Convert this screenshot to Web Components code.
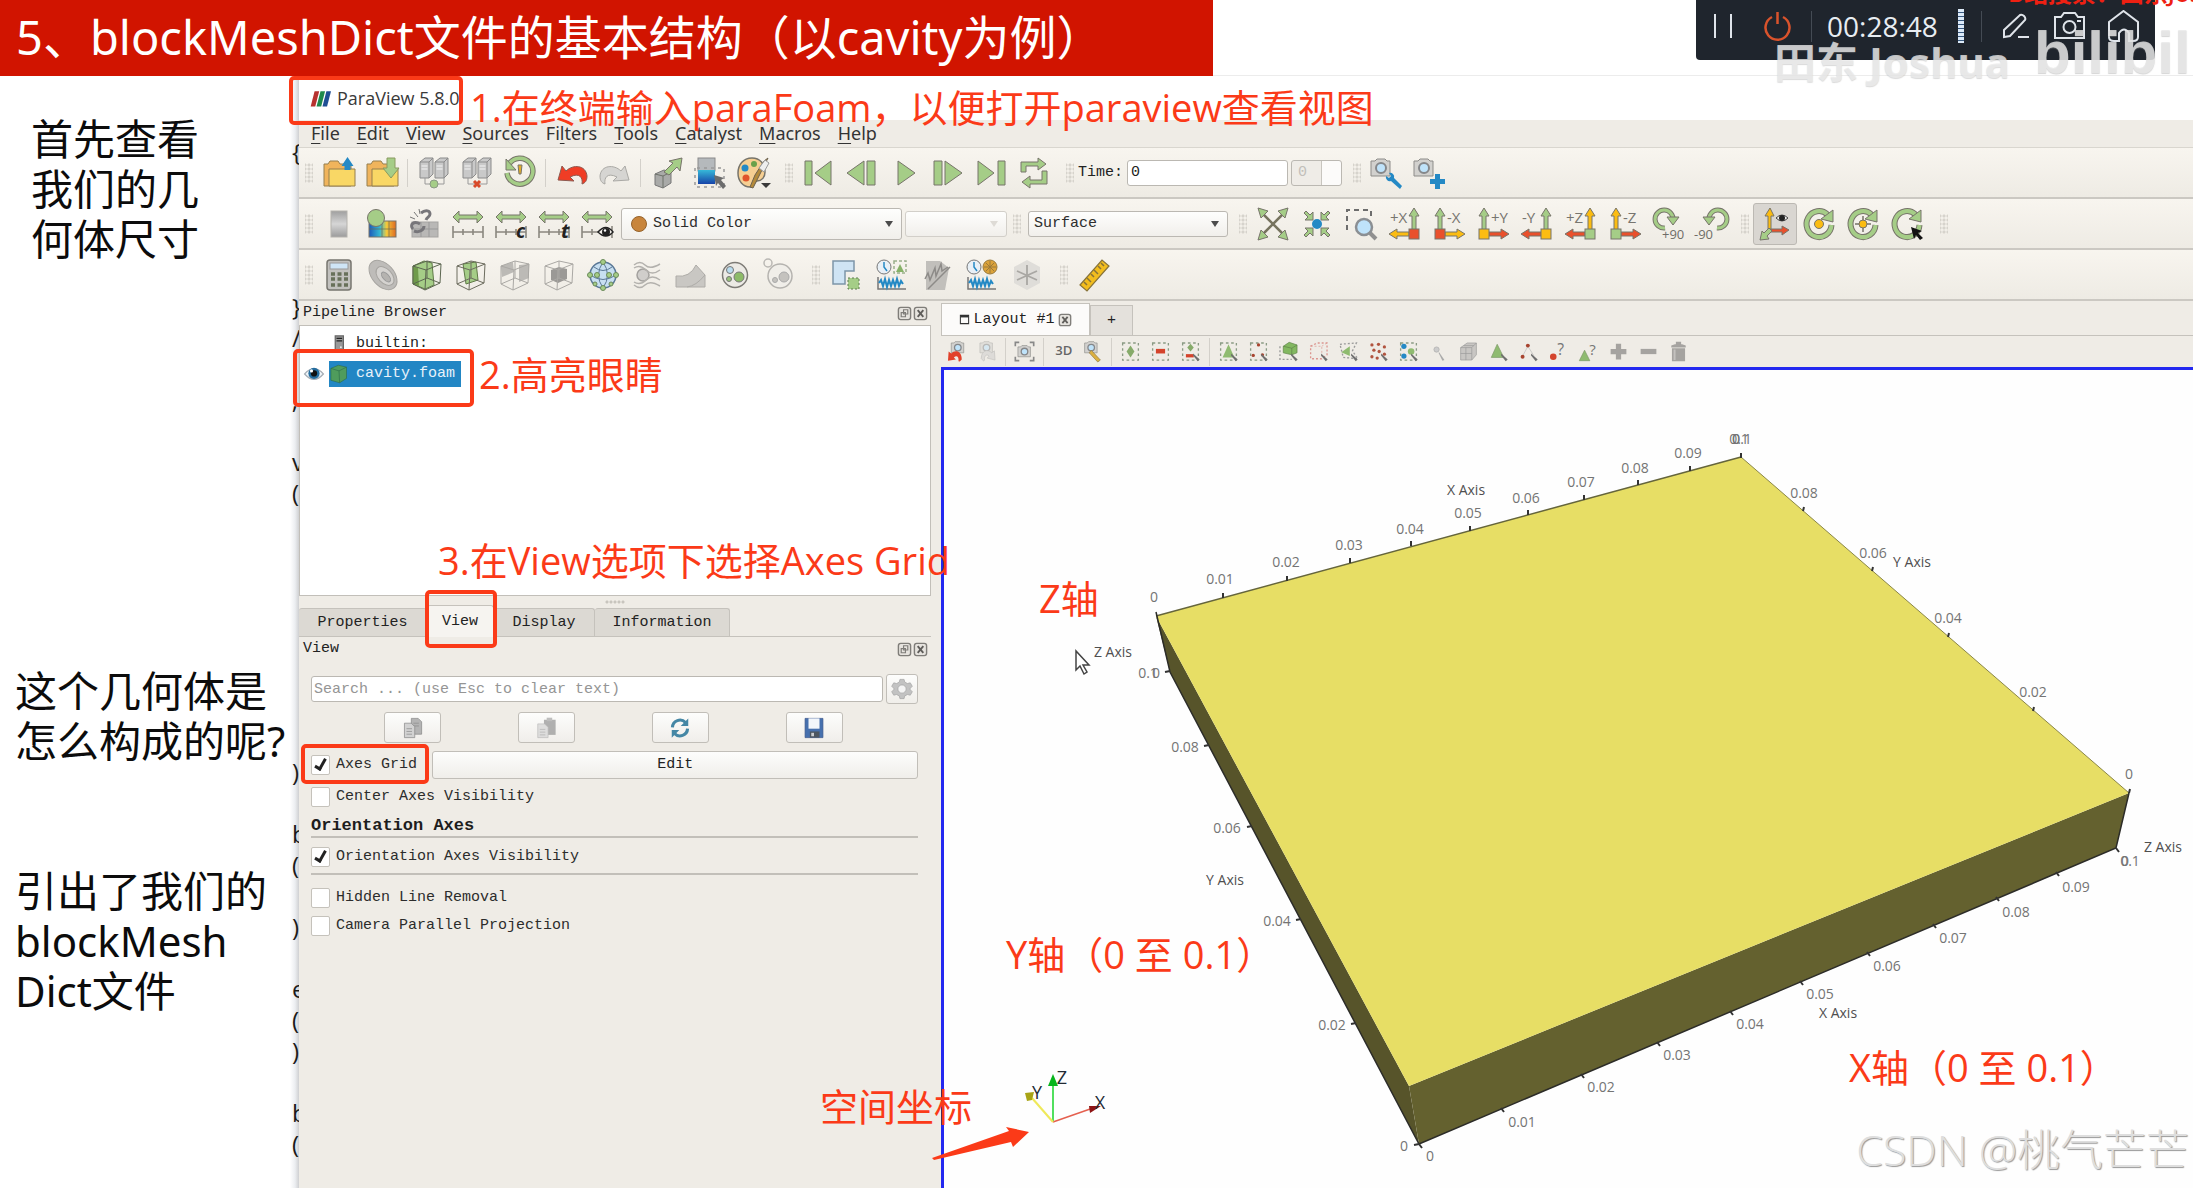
<!DOCTYPE html>
<html lang="zh-CN">
<head>
<meta charset="utf-8">
<title>blockMeshDict文件的基本结构</title>
<style>
html,body{margin:0;height:100%;overflow:hidden;background:#fff}
</style>
</head>
<body>
<slide-page></slide-page>
<script>
const UI = '"Open Sans","Noto Sans CJK SC",sans-serif';
const WIDE = '"Noto Sans","Noto Sans CJK SC",sans-serif';
const MONO = '"Liberation Mono","Noto Sans CJK SC",monospace';
const G = '#a5cd87', K = '#77746a', Y = '#fbbc12', R = '#e9502c', B = '#2489c5';

/* ---------- icon drawings, all on a 32 x 32 grid ---------- */
const server = (x, f) => `<path d="M${x} 5l5-4h8v16l-4 4h-9z" fill="${f}" stroke="#8b8b8b"/><path d="M${x} 5h9l4-4M${x+9} 5v16" fill="none" stroke="#8b8b8b"/><path d="M${x+1.5} 9h6M${x+1.5} 12h6" stroke="#f4f4f4"/>`;
const range = `<path d="M1 9l6-6v4h18V3l6 6-6 6v-4H7v4z" fill="${G}" stroke="${K}"/><path d="M1 18v12M31 18v12M11 21v6M21 21v6M1 24h30" stroke="#8a877f" stroke-width="1.6" fill="none"/>`;
const cam = (x, y) => `<path d="M${x} ${y+3}h4l2-2h8l2 2h3v15h-19z" fill="#d2d1ce" stroke="#8d8c89"/><circle cx="${x+10}" cy="${y+10}" r="5" fill="#bfe3fa" stroke="#85878a" stroke-width="2"/>`;
const cubeLines = c => `<path d="M2 7l14-5 14 3-1 19-15 7L2 25zM2 7l13 4 15-6M15 11l-1 20M2 25l14-6 13 5M16 2v17" fill="none" stroke="${c}"/>`;
const up = (x, f) => `<path d="M${x} 0l5 8h-3v16h-4V8h-3z" fill="${f}" stroke="${K}"/>`;
const side = (l, f) => l ? `<path d="M0 26l8-5v3h12v4H8v3z" fill="${f}" stroke="${K}"/>` : `<path d="M32 26l-8-5v3H12v4h12v3z" fill="${f}" stroke="${K}"/>`;
const axis = (t, l, cu, cs, cb) => l
  ? up(25, cu) + side(1, cs) + `<rect x="20" y="21" width="10" height="10" fill="${cb}" stroke="${K}"/><text x="1" y="15" font-size="15" fill="#77756f">${t}</text>`
  : up(7, cu) + side(0, cs) + `<rect x="2" y="21" width="10" height="10" fill="${cb}" stroke="${K}"/><text x="14" y="15" font-size="15" fill="#77756f">${t}</text>`;
const sel = (s) => `<rect x="4" y="3" width="24" height="26" fill="none" stroke="#8a9a84" stroke-width="2" stroke-dasharray="4 4"/>${s}`;
const hand = `<path d="M20 19l10 9-3 3-7-9z" fill="#6f6f6f"/>`;
const ring = `<path d="M24.500 6.500A12.500 13 0 1 0 28.500 17" fill="none" stroke="${K}" stroke-width="6"/><path d="M24.500 6.500A12.500 13 0 1 0 28.500 17" fill="none" stroke="${G}" stroke-width="4"/><path d="M30 2v12l-12-3z" fill="${G}" stroke="${K}"/>`;
const plot = `<path d="M2 18v12h28" stroke="#777" stroke-width="1.500" fill="none"/><path d="M3 24l2-3 2 6 2-7 2 8 2-7 2 6 2-6 2 6 2-7 2 7 2-5 2 3" stroke="${B}" stroke-width="2" fill="none"/>`;
const clock = `<circle cx="8" cy="8" r="7" fill="#e8f0f6" stroke="#777"/><path d="M8 3v5l3 4" stroke="${B}" stroke-width="1.500" fill="none"/>`;

const ICONS = {
  open: `<path d="M1 29V7h4l2-3h8l2 3h11v22z" fill="#f0b45c" stroke="#957e4e"/><path d="M6 12h26v17H6z" fill="#f9d765" stroke="#957e4e"/><path d="M24.500 0l6 9h-3v4h-6V9h-3z" fill="${B}"/>`,
  save: `<path d="M1 29V7h4l2-3h8l2 3h11v22z" fill="#f0b45c" stroke="#957e4e"/><path d="M6 12h26v17H6z" fill="#f9d765" stroke="#957e4e"/><path d="M21 1h8v10h4l-8 10-8-10h4z" fill="${G}" stroke="#8a9a60"/>`,
  connect: server(2, '#c9c9c9') + server(17, '#c9c9c9') + `<path d="M7 21v6h19v-6" fill="none" stroke="#999"/><circle cx="16" cy="27" r="4" fill="${G}" stroke="#8a9a84"/>`,
  disconnect: server(2, '#c9c9c9') + server(17, '#c9c9c9') + `<path d="M7 21v6h19v-6" fill="none" stroke="#999"/><path d="M13 24l6 6M19 24l-6 6" stroke="#d84a2a" stroke-width="3"/>`,
  reload: `<path d="M5 7A13 13 0 1 1 3 16" fill="none" stroke="${K}" stroke-width="5.500"/><path d="M5 7A13 13 0 1 1 3 16" fill="none" stroke="${G}" stroke-width="3.500"/><path d="M2 2v11h10z" fill="${G}" stroke="${K}"/><path d="M14 8h4l-1 9h-2z" fill="#e2ae2c" stroke="${K}"/>`,
  undo: `<path d="M2 23l4-14 4 5c7-7 20-6 21 5 0 5-2 7-5 8 1-6-2-12-12-7l4 4z" fill="#f03d25" stroke="#8d5a50"/>`,
  redo: `<path d="M30 23L26 9l-4 5C15 7 2 8 1 19c0 5 2 7 5 8-1-6 2-12 12-7l-4 4z" fill="#d6d5d2" stroke="#aaa9a5"/>`,
  extract: `<path d="M4 17l9-4 7 2v11l-8 5-8-3z" fill="#a9aaa8" stroke="#777"/><path d="M4 17l8 2 8-4M12 19v12" stroke="#6d7169" fill="none"/><path d="M13 15l9-9-4-2 13-3-2 13-3-4-8 8z" fill="${G}" stroke="${K}"/>`,
  colormap: `<defs><linearGradient id="g" x2="0" y2="1"><stop offset="0" stop-color="#36b8d8"/><stop offset="1" stop-color="#1643a8"/></linearGradient></defs><rect x="4" y="1" width="17" height="13" fill="#b5b9bc" stroke="#8a8a8a"/><rect x="4" y="13" width="17" height="14" fill="url(#g)"/><path d="M1 11v19h29V11z" fill="none" stroke="#999" stroke-width="1.500" stroke-dasharray="3 4"/><path d="M20 18l10 3-3 2 5 6-3 3-5-6-2 3z" fill="#6c6c6c"/>`,
  palette: `<path d="M15 1C6 1 1 8 1 16s5 14 12 14c5 0 3-5 7-6 5 0 8-4 8-9 0-8-5-14-13-14z" fill="#f6cf92" stroke="${K}" stroke-width="1.500"/><circle cx="8" cy="11" r="3.500" fill="${B}"/><circle cx="17" cy="7" r="3" fill="#6aa14a"/><circle cx="9" cy="21" r="3.500" fill="#e0532a"/><path d="M27 4l4-3-9 18-6 12-3-1 5-12z" fill="#b48a3a" stroke="#6c6250"/><path d="M22 11l6-8 4 3-5 9z" fill="#eee" stroke="#999"/><path d="M24 26h10l-5 5z" fill="#3a3a3a"/>`,
  first: `<path d="M2 4h7v24H2zM28 4v24L12 16z" fill="${G}" stroke="${K}"/>`,
  prev: `<path d="M21 4h8v24h-8zM18 4v24L1 16z" fill="${G}" stroke="${K}"/>`,
  play: `<path d="M9 4v24l17-12z" fill="${G}" stroke="${K}"/>`,
  next: `<path d="M2 4h8v24H2zM13 4v24l17-12z" fill="${G}" stroke="${K}"/>`,
  last: `<path d="M23 4h7v24h-7zM3 4v24l16-12z" fill="${G}" stroke="${K}"/>`,
  loop: `<path d="M3 15V5h17V1l8 6-8 6V9H8v6zM29 14v13H12v4l-8-6 8-6v4h12v-9z" fill="${G}" stroke="${K}"/>`,
  camtool: cam(0, 1) + `<path d="M18 16a4 4 0 0 1 5 5l8 8-2 3-9-8a4 4 0 0 1-5-5l3 2 2-2z" fill="${B}"/>`,
  camadd: cam(0, 1) + `<path d="M21 17h5v5h5v5h-5v5h-5v-5h-5v-5h5z" fill="${B}"/>`,
  legend: `<defs><linearGradient id="g" x2="0" y2="1"><stop offset="0" stop-color="#9f9f9f"/><stop offset=".5" stop-color="#d6d6d6"/><stop offset="1" stop-color="#9b9b9b"/></linearGradient></defs><rect x="8" y="3" width="16" height="26" fill="url(#g)" stroke="#b5b3ae"/>`,
  editmap: `<defs><linearGradient id="g"><stop offset="0" stop-color="#1c59ba"/><stop offset=".4" stop-color="#35b8d2"/><stop offset=".65" stop-color="#f3c93a"/><stop offset="1" stop-color="#df6b22"/></linearGradient></defs><rect x="3" y="13" width="27" height="16" fill="url(#g)" stroke="${K}"/><path d="M3 21h27M16 13v16M23 13v16" stroke="#6b6b50" stroke-width=".7"/><circle cx="10" cy="10" r="8.500" fill="${G}" stroke="${K}"/>`,
  unlink: `<rect x="3" y="14" width="26" height="15" fill="#b9b8b6" stroke="#a5a4a1"/><path d="M3 21h26M12 14v15M20 14v15" stroke="#999"/><path d="M12 5c5-4 9-2 9 1s-3 3-4 6M4 21c-4-4 1-9 7-5M15 18c0 4-5 7-10 5" fill="none" stroke="#77767a" stroke-width="3"/><path d="M5 4l4 5M1 9l5 2M10 1l1 5" stroke="#777"/>`,
  range,
  rangec: range + `<text x="21" y="30" font-size="19" font-weight="700" font-style="italic" fill="#222">c</text>`,
  ranget: range + `<text x="23" y="30" font-size="20" font-weight="700" font-style="italic" fill="#222">t</text>`,
  rangeeye: range + `<path d="M17 24q8-9 15 0-7 8-15 0z" fill="#f3f0ea" stroke="#222" stroke-width="1.500"/><circle cx="25" cy="24" r="4" fill="#222"/><circle cx="24" cy="22.500" r="1.200" fill="#fff"/>`,
  expand: `<path d="M5 5l22 22M27 5L5 27" stroke="#76735e" stroke-width="2.500"/><path d="M1 0l10 3-7 7zM31 0l-3 10-7-7zM1 32l3-10 7 7zM31 32l-10-3 7-7z" fill="${G}" stroke="${K}"/>`,
  center: `<circle cx="16" cy="16" r="5" fill="${B}"/><path id="q" d="M12 12H4l3-3-4-4 2-2 4 4 3-3z" fill="${G}" stroke="${K}"/><path d="M20 12h8l-3-3 4-4-2-2-4 4-3-3zM12 20H4l3 3-4 4 2 2 4-4 3 3zM20 20h8l-3 3 4 4-2 2-4-4-3 3z" fill="${G}" stroke="${K}"/>`,
  zoom: `<path d="M2 22V2h24v6" fill="none" stroke="#6d6d6d" stroke-width="2" stroke-dasharray="5 4"/><path d="M24 24l7 7" stroke="#909090" stroke-width="4"/><circle cx="19" cy="19" r="8" fill="#bfe3fa" stroke="#8b8f93" stroke-width="2.500"/>`,
  px: axis('+X', 1, G, Y, R), mx: axis('-X', 0, G, Y, R), py: axis('+Y', 0, G, R, Y),
  my: axis('-Y', 1, G, R, Y), pz: axis('+Z', 1, Y, R, G), mz: axis('-Z', 0, Y, R, G),
  rotp: `<path d="M12 20A9 9 0 1 1 20 12" fill="none" stroke="${K}" stroke-width="5"/><path d="M12 20A9 9 0 1 1 20 12" fill="none" stroke="${G}" stroke-width="3"/><path d="M14 9h12l-6 8z" fill="${G}" stroke="${K}"/><text x="9" y="31" font-size="13" fill="#6f6d68">+90</text>`,
  rotm: `<path d="M20 20A9 9 0 1 0 12 12" fill="none" stroke="${K}" stroke-width="5"/><path d="M20 20A9 9 0 1 0 12 12" fill="none" stroke="${G}" stroke-width="3"/><path d="M6 9h12l-6 8z" fill="${G}" stroke="${K}"/><text x="-3" y="31" font-size="13" fill="#6f6d68">-90</text>`,
  showaxes: `<path d="M11 0l4 8h-3v13h-3V8H6z" fill="${Y}" stroke="${K}"/><path d="M30 22l-7-4v3H12v3h11v3z" fill="${R}" stroke="${K}"/><path d="M1 32l2-9 2 2 5-5 3 3-5 5 2 3z" fill="${G}" stroke="${K}"/><path d="M17 10q6-6 12 0-6 6-12 0z" fill="#eee" stroke="#444"/><circle cx="23" cy="10" r="3" fill="#222"/>`,
  ring1: ring + `<circle cx="16" cy="16" r="4.500" fill="${Y}" stroke="${K}"/>`,
  ring2: ring + `<path d="M16 8v16M8 16h16" stroke="${K}" stroke-width="1.500"/><circle cx="16" cy="16" r="4" fill="${Y}" stroke="${K}"/>`,
  ring3: ring + `<path d="M20 19l11 4-4 2 5 5-3 2-4-5-2 4z" fill="#111"/>`,
  calc: `<rect x="4" y="1" width="24" height="30" rx="3" fill="#c2c1be" stroke="#77756f" stroke-width="1.500"/><rect x="7" y="4" width="18" height="6" fill="#cfe5f6" stroke="#999"/><path d="M8 15h17M8 20h17M8 26h17" stroke="#68705a" stroke-width="3.500" stroke-dasharray="4 2.500"/>`,
  contour: `<ellipse cx="16" cy="16" rx="11" ry="17" transform="rotate(-42 16 16)" fill="#bebcb9" stroke="#a6a4a0"/><ellipse cx="18" cy="17" rx="7" ry="11" transform="rotate(-42 18 17)" fill="#d5d3d0" stroke="#a6a4a0"/><ellipse cx="19" cy="18" rx="3" ry="6" transform="rotate(-42 19 18)" fill="#b5b3b0" stroke="#999"/>`,
  clip: `<path d="M2 7l11-5 8 2 2 22-9 4-12-5z" fill="${G}" stroke="#5f7a46"/><path d="M2 7l5 2 1 18-6-2z" fill="#6f9b4b"/>` + cubeLines('#5c6650'),
  slice: `<path d="M8 5l13-2 2 18-12 4z" fill="${G}" stroke="#5f7a46"/>` + cubeLines('#6c6c5e'),
  threshold: `<path d="M2 7l12-4 1 10-12 5zM20 6l10-1v14l-10 4z" fill="#bcbab6"/>` + cubeLines('#aaa8a4'),
  subset: `<path d="M8 11l8-3 8 2v10l-9 4-7-3z" fill="#9b9996"/>` + cubeLines('#aaa8a4'),
  glyph: `<circle cx="16" cy="16" r="13" fill="#c7dff1" stroke="#5a7896" stroke-width="1.500"/><path d="M3 16q13 9 26 0M16 3q-9 13 0 26M16 3q9 13 0 26M7 8q9 7 18 0" fill="none" stroke="#5a7896"/><g fill="${G}" stroke="#6a8a5a"><circle cx="16" cy="3" r="2.500"/><circle cx="3" cy="16" r="2.500"/><circle cx="29" cy="16" r="2.500"/><circle cx="16" cy="29" r="2.500"/><circle cx="10" cy="16" r="2.500"/><circle cx="22" cy="16" r="2.500"/><circle cx="8" cy="25" r="2"/><circle cx="24" cy="25" r="2"/></g>`,
  stream: `<circle cx="12" cy="16" r="6" fill="#d0cecb" stroke="#a3a19e" stroke-width="1.500"/><path d="M3 6q6-5 11 0t15-1M3 9q6-4 12 2t14 0M3 26q6 5 11 0t15 1M3 23q6 4 12-2t14 0" fill="none" stroke="#b3b1ad" stroke-width="1.500"/>`,
  warp: `<path d="M1 17q14 2 20-11l9 10v12H1z" fill="#c9c7c3" stroke="#aeaca8"/><path d="M30 16q-9 11-18 12" fill="none" stroke="#aeaca8"/>`,
  group: `<circle cx="16" cy="16" r="12.500" fill="#eceae5" stroke="#7d7b76" stroke-width="1.500"/><circle cx="11" cy="11" r="3.500" fill="#b9dcee" stroke="#777"/><circle cx="20" cy="18" r="5" fill="#8dbb68" stroke="#777"/><circle cx="10" cy="20" r="2.500" fill="#9ac37a" stroke="#777"/>`,
  level: `<circle cx="5" cy="4" r="4" fill="none" stroke="#bab8b4" stroke-width="1.500"/><circle cx="17" cy="17" r="12" fill="#f0eee9" stroke="#b5b3af" stroke-width="1.500"/><circle cx="21" cy="18" r="5" fill="#c4c2be" stroke="#aaa"/><circle cx="12" cy="21" r="2.500" fill="#c4c2be" stroke="#aaa"/>`,
  extractsel: `<path d="M2 2h21v10H14v13H2z" fill="#cfe4f4" stroke="#7d95a8" stroke-width="1.500"/><rect x="17" y="19" width="11" height="11" fill="${G}" stroke="#5e7a50" stroke-dasharray="2 2"/>`,
  plotsel: clock + `<rect x="18" y="2" width="12" height="12" fill="none" stroke="#9ab08c" stroke-width="1.500" stroke-dasharray="3 2"/><path d="M24 5l4 8h-8z" fill="#86b268"/>` + plot,
  plotline: `<path d="M5 2h14l9 7-4 22H5z" fill="#c1bfbb"/><path d="M4 20l3-6 2 7 5-12 1 8 5-12 1 7 6-4M7 30L29 8" stroke="#8d8b88" stroke-width="1.500" fill="none"/>`,
  plotglobal: clock + `<circle cx="24" cy="8" r="7" fill="#dba23a" stroke="#9a7a3a"/><path d="M18 8h12M24 2v12M20 4l8 8M28 4l-8 8" stroke="#9a7a3a"/>` + plot,
  probe: `<path d="M3 8l13-7 13 7v16l-13 7-13-7z" fill="#dfddd9"/><path d="M16 6v20M6 12l20 9M26 12L6 21" stroke="#a9a7a3" stroke-width="1.800"/>`,
  ruler: `<path d="M2 26L24 1l7 6L9 32z" fill="#f2bd1e" stroke="#87733a" stroke-width="1.200"/><path d="M6 23l3 3M9 19l4 4M13 15l3 3M16 11l4 4M20 7l3 3M23 4l3 3" stroke="#87733a" stroke-width="1.500"/>`,
  vundo: cam(8, 0) + `<path d="M3 30l1-14 4 3c6-6 16-4 16 9-4 4-4 4-5 2 1-6-3-9-7-5l3 3z" fill="#e1402a"/>`,
  vredo: `<g opacity=".5">${cam(6, 0)}<path d="M29 29l-1-14-4 3C18 12 8 14 8 27c4 4 4 4 5 2-1-6 3-10 7-6l-3 3z" fill="#ccc" stroke="#999"/></g>`,
  snap: cam(6, 6) + `<path d="M2 8V2h6M24 2h6v6M30 24v6h-6M8 30H2v-6" fill="none" stroke="#888" stroke-width="2.500"/>`,
  three: `<text x="5" y="22" font-size="20" font-weight="600" fill="#666">3D</text>`,
  vzoom: cam(4, 0) + `<path d="M14 14l14 15-4 3-13-14z" fill="#dcb040" stroke="#8d7743"/>`,
  sadd: sel(`<path d="M16 7l6 9-6 9-6-9z" fill="#86ab6a"/>`), sminus: sel(`<path d="M9 12h14v7H9z" fill="#d4442c"/>`),
  stoggle: sel(`<path d="M16 4l5 6-5 6-5-6z" fill="#86ab6a"/><path d="M9 20h12v5H9z" fill="#d4442c"/>` + hand),
  scell: sel(`<path d="M16 5l9 20H7z" fill="#8fbb70"/>` + hand), spoint: sel(`<g fill="#a8442f"><circle cx="16" cy="6" r="2.500"/><circle cx="8" cy="22" r="2.500"/><circle cx="22" cy="21" r="2.500"/></g>` + hand),
  sfrust: `<path d="M8 8l9-6 12 4v12l-8 3-13-3z" fill="#83b861" stroke="#5c8147"/><path d="M8 8l13 3 8-5M21 11v10" fill="none" stroke="#5c8147"/><path d="M3 8v20h18" fill="none" stroke="#999" stroke-dasharray="3 3" stroke-width="2"/>` + hand,
  sfrustp: `<path d="M4 8l10-5h15v18l-8 6H4z" fill="none" stroke="#dc9690" stroke-width="2" stroke-dasharray="3 3"/><path d="M4 8h17v17M21 8l8-5" stroke="#dc9690" fill="none" stroke-dasharray="3 3"/>` + hand,
  spoly: `<path d="M5 17l13-9v15z" fill="#8fbb70"/><path d="M3 5l25-2-6 12 8 12-22-2z" fill="none" stroke="#999" stroke-dasharray="3 3" stroke-width="2"/>` + hand,
  spolyp: `<g fill="#b1543f"><circle cx="6" cy="6" r="2.500"/><circle cx="16" cy="5" r="2.500"/><circle cx="25" cy="9" r="2.500"/><circle cx="9" cy="14" r="2.500"/><circle cx="17" cy="16" r="2.500"/><circle cx="6" cy="24" r="2.500"/><circle cx="14" cy="26" r="2.500"/><circle cx="25" cy="20" r="2.500"/></g>` + hand,
  sblock: sel(`<g fill="${B}"><circle cx="9" cy="8" r="4"/><circle cx="9" cy="23" r="4"/></g><circle cx="20" cy="16" r="5" fill="#8fbb70"/>` + hand),
  ipoint: `<circle cx="13" cy="13" r="4" fill="#ccc" stroke="#aaa"/><path d="M17 17l8 12-3 1-6-12z" fill="#aaa"/>`,
  icell: `<path d="M4 10l10-7h14v18l-7 8H4z" fill="#c8c6c3" stroke="#999"/><path d="M4 10h17v19M21 10l7-7M4 19h17M12 10v19M9 7h15" fill="none" stroke="#999"/>`,
  hcell: `<path d="M14 5l10 20H5z" fill="#8fbb70" stroke="#7a9565"/>` + hand, hpoint: `<path d="M15 8L7 23M15 8l9 14" stroke="#bbb"/><g fill="#a8442f"><circle cx="15" cy="7" r="3"/><circle cx="7" cy="24" r="3"/></g>` + hand,
  qpoint: `<circle cx="8" cy="24" r="5" fill="#d4442c"/><text x="14" y="22" font-size="24" fill="#777">?</text>`,
  qcell: `<path d="M10 14l8 16H2z" fill="#8fbb70" stroke="#7a9565"/><text x="17" y="21" font-size="23" fill="#777">?</text>`,
  plus: `<path d="M12 4h8v8h8v8h-8v8h-8v-8H4v-8h8z" fill="#a5a3a0"/>`, minus: `<path d="M4 12h24v8H4z" fill="#a5a3a0"/>`,
  trash: `<path d="M5 7q11-6 22 0v3H5zM6 11h20v20H6zM12 1h8v4h-8z" fill="#a5a3a0"/><path d="M10 13v16" stroke="#c3c1be" stroke-width="3"/>`,
  copy: `<path d="M15 2h10l5 5v18H15z" fill="#b4b4b4" stroke="#858585"/><path d="M18 9h8M18 13h8" stroke="#888"/><path d="M5 9h10l5 5v16H5z" fill="#d2d2d2" stroke="#858585"/><path d="M8 17h8M8 21h8M8 25h8" stroke="#888"/>`,
  paste: `<g opacity=".75"><path d="M13 4h17v22H13z" fill="#999"/><path d="M17 1h8v5h-8z" fill="#aaa"/><path d="M4 10h10l5 5v15H4z" fill="#d6d6d6" stroke="#aaa"/><path d="M7 18h8M7 22h8M7 26h8" stroke="#999"/></g>`,
  refresh: `<path d="M5 15A11 11 0 0 1 24 8M27 17A11 11 0 0 1 8 24" fill="none" stroke="#4587a5" stroke-width="4.500"/><path d="M28 2v11H17zM4 30V19h11z" fill="#4587a5"/>`,
  disk: `<path d="M3 2h26v28H3z" fill="#4670ae" stroke="#3c568a"/><path d="M8 2h16v15H8z" fill="#f2f6fb"/><path d="M10 21h14v9H10z" fill="#4d5660"/><path d="M12 23h4v5h-4z" fill="#c9ccd0"/>`,
  gear: `<path d="M13 2h6l1 4 4 2 4-1 3 5-3 3v2l3 3-3 5-4-1-4 2-1 4h-6l-1-4-4-2-4 1-3-5 3-3v-2l-3-3 3-5 4 1 4-2z" fill="#c2c2c2" stroke="#a2a2a2"/><circle cx="16" cy="16" r="6" fill="#f4f4f4" stroke="#a2a2a2"/>`,
  float: `<rect x="3" y="3" width="26" height="26" rx="5" fill="#e6e3de" stroke="#7f7d79" stroke-width="3"/><path d="M14 8h9v9h-9zM9 14h9v9H9z" fill="none" stroke="#7f7d79" stroke-width="2.500"/>`,
  close: `<rect x="3" y="3" width="26" height="26" rx="5" fill="#e6e3de" stroke="#7f7d79" stroke-width="3"/><path d="M10 9l12 14M22 9L10 23" stroke="#5f5d5a" stroke-width="4"/>`,
  host: `<path d="M10 3h13v26H10z" fill="#999" stroke="#666" stroke-width="2"/><path d="M12 7h9M12 11h9" stroke="#222" stroke-width="2"/><circle cx="19" cy="21" r="1.500" fill="#eee"/>`,
  block: `<path d="M3 7l12-5 13 3v18l-11 7-14-4z" fill="#4f9c5c" stroke="#2b6b49"/><path d="M3 7l13 4 12-6M16 11l1 19" stroke="#2b6b49" fill="none"/>`,
  eye: `<path d="M1 16Q16-1 31 16 16 33 1 16z" fill="#f1f6fa" stroke="#a5adb5" stroke-width="2"/><circle cx="16" cy="15" r="9" fill="#236c9e"/><circle cx="16" cy="15" r="5" fill="#111"/><circle cx="12" cy="11" r="2.500" fill="#fff"/>`,
  frame: `<path d="M4 4h24v24H4z" fill="none" stroke="#333" stroke-width="3"/><path d="M4 7h24" stroke="#333" stroke-width="6"/>`,
  logo: `<path d="M7 5h7L8 28H1z" fill="#b7322f"/><path d="M16 5h7l-6 23h-7z" fill="#1f8a4c"/><path d="M25 5h7l-6 23h-7z" fill="#1f4f94"/>`
};

const define = (name, css, html, init) => customElements.define(name, class extends HTMLElement {
  constructor() { super(); this.attachShadow({ mode: 'open' }); }
  connectedCallback() {
    if (this.shadowRoot.childNodes.length) return;
    this.shadowRoot.innerHTML = `<style>*{box-sizing:border-box}${css}</style>${typeof html === 'function' ? html(this) : html}`;
    if (init) init(this);
  }
});

/* ---------- small parts ---------- */
define('pv-icon', `:host{display:block;flex:none;width:var(--icon,32px);height:var(--icon,32px)}svg{display:block;width:100%;height:100%;overflow:visible;font-family:${UI}}`,
  el => `<svg viewBox="0 0 32 32" aria-hidden="true">${ICONS[el.getAttribute('name')]}</svg>`);

define('tool-button', `:host{display:block;flex:none;width:var(--cell,43px)}button{width:100%;height:var(--tall,42px);padding:0;border:1px solid transparent;border-radius:3px;background:none;display:flex;align-items:center;justify-content:center}:host([pressed]) button{background:#d9d6d1;border-color:#bcb9b3}`,
  el => `<button type="button" aria-label="${el.getAttribute('icon')}"><pv-icon name="${el.getAttribute('icon')}"></pv-icon></button>`);

define('tool-sep', `:host{display:block;flex:none;width:var(--sep,9px);height:28px;background:linear-gradient(#d3d0ca,#d3d0ca) center/1px 100% no-repeat}`, '');
define('tool-handle', `:host{display:block;flex:none;width:8px;height:20px;margin:0 4px 0 6px;background:radial-gradient(circle,#d6d3cc 1px,transparent 2px) center/4px 4px}`, '');
define('tool-group', `:host{display:flex;align-items:center;margin-right:5px}:host([tight]){margin-right:0}`, '<slot></slot>');
define('tool-bar', `:host{display:flex;align-items:center;height:51px;background:linear-gradient(#f8f5ef,#eeebe4);border-bottom:2px solid #cbc8c2}:host([slim]){height:31px;border:0;background:#efece6}`, '<slot></slot>');

define('combo-box', `:host{display:block;flex:none;height:26px;margin-left:3px}
div{height:100%;display:flex;align-items:center;border:1px solid #bbb8b2;border-radius:3px;background:linear-gradient(#fefefd,#f1efeb);padding:0 8px 0 5px}
select{appearance:none;flex:1;min-width:0;border:0;background:none;font:15px/20px ${MONO};color:#2e2e2e;padding:0;opacity:1}
svg{flex:none}.dot{margin:0 6px 0 4px}:host([off]) div{border-color:#d2cfc9}`,
  el => `<div>${el.hasAttribute('dot') ? '<svg class="dot" width="16" height="16"><circle cx="8" cy="8" r="7.500" fill="#c8853c" stroke="#96632c"/></svg>' : ''}<select aria-label="${el.getAttribute('label')}" ${el.hasAttribute('off') ? 'disabled' : ''}><option>${el.getAttribute('value') || ''}</option></select><svg width="8" height="6"><path d="M0 0h8L4 6z" fill="${el.hasAttribute('off') ? '#dedbd6' : '#4c4c4c'}"/></svg></div>`);

define('check-row', `:host{display:block;flex:none}label{display:flex;align-items:center;gap:6px;height:22px;font:15px/22px ${MONO};color:#2c2c2c;white-space:pre}
input{appearance:none;display:flex;align-items:flex-start;justify-content:center;width:19px;height:20px;margin:0;padding-top:1px;border:1px solid #c5c2bb;border-radius:2px;background:#fff}
input:checked::after{content:"";width:7px;height:13px;box-sizing:border-box;border:solid #222;border-width:0 3px 3px 0;transform:rotate(30deg)}`,
  el => `<label><input type="checkbox" ${el.hasAttribute('checked') ? 'checked' : ''}><slot></slot></label>`);

define('dock-title', `:host{display:flex;align-items:center;flex:none;height:24px;padding:0 2px 0 4px;font:15px/20px ${MONO};color:#222}span{flex:1}button{border:0;background:none;padding:0;width:16px;height:16px;--icon:15px}`,
  `<span><slot></slot></span><button type="button" aria-label="float"><pv-icon name="float"></pv-icon></button><button type="button" aria-label="close"><pv-icon name="close"></pv-icon></button>`);

/* ---------- application parts ---------- */
define('menu-bar', `:host{display:block;background:#efece6;height:28px;border-bottom:1px solid #d9d6cf;box-sizing:border-box}nav{display:flex;gap:17px;padding:0 12px;font:18px/27px ${WIDE};color:#333}a{color:inherit;text-decoration:none}u{text-underline-offset:3px;text-decoration-thickness:1px}`,
  `<nav><a href="#"><u>F</u>ile</a><a href="#"><u>E</u>dit</a><a href="#"><u>V</u>iew</a><a href="#"><u>S</u>ources</a><a href="#">Fi<u>l</u>ters</a><a href="#"><u>T</u>ools</a><a href="#"><u>C</u>atalyst</a><a href="#"><u>M</u>acros</a><a href="#"><u>H</u>elp</a></nav>`);

define('title-bar', `:host{display:flex;align-items:center;gap:6px;height:44px;padding-left:11px;background:#fff;font:18px/24px ${UI};color:#3a3a3a;--icon:21px}`, `<pv-icon name="logo"></pv-icon><span>ParaView 5.8.0</span>`);

const tb = s => s.split(' ').map(n => n === '|' ? '<tool-sep></tool-sep>' : `<tool-button icon="${n.replace('!', '')}"${n.endsWith('!') ? ' pressed' : ''}></tool-button>`).join('');

define('main-tools', `:host{display:block}.time{display:flex;align-items:center;gap:3px;font:15px/20px ${MONO};color:#222}.time label{width:46px}
input{height:26px;border:1px solid #bbb8b2;border-radius:3px;background:#fff;font:15px/20px ${MONO};color:#222;padding:0 3px;margin:0}
.t{width:161px}.s{width:51px;color:#c2bfba;background:linear-gradient(90deg,#efece7 29px,#c8c5bf 29px,#c8c5bf 30px,#fcfbfa 30px);padding-left:6px}
.c1{width:281px;height:32px}.c2{width:102px}.c3{width:200px}.w44{--cell:44px}.w45{--cell:45px}`,
`<tool-bar><tool-handle></tool-handle><tool-group>${tb('open save | connect disconnect reload | undo redo | extract colormap palette')}</tool-group>
<tool-handle></tool-handle><tool-group>${tb('first prev play next last loop')}</tool-group>
<tool-handle></tool-handle><tool-group><div class="time"><label for="t">Time:</label><input id="t" class="t" value="0"><input class="s" aria-label="time index" value="0" disabled></div></tool-group>
<tool-handle></tool-handle><tool-group>${tb('camtool camadd')}</tool-group></tool-bar>
<tool-bar><tool-handle></tool-handle><tool-group tight>${tb('legend editmap unlink range rangec ranget rangeeye')}<combo-box class="c1" dot label="Coloring" value="Solid Color"></combo-box><combo-box class="c2" off label="Component"></combo-box></tool-group>
<tool-handle></tool-handle><tool-group><combo-box class="c3" label="Representation" value="Surface"></combo-box></tool-group>
<tool-handle></tool-handle><tool-group tight class="w44">${tb('expand center zoom px mx py my pz mz rotp rotm')}</tool-group>
<tool-handle></tool-handle><tool-group class="w44">${tb('showaxes! ring1 ring2 ring3')}</tool-group><tool-handle></tool-handle></tool-bar>
<tool-bar><tool-handle></tool-handle><tool-group class="w44">${tb('calc contour clip slice threshold subset glyph stream warp group level')}</tool-group>
<tool-handle></tool-handle><tool-group class="w45">${tb('extractsel plotsel plotline plotglobal probe')}</tool-group>
<tool-handle></tool-handle><tool-group>${tb('ruler')}</tool-group></tool-bar>`);

define('pipeline-tree', `:host{display:block;flex:none;box-sizing:border-box;height:271px;border:1px solid #c2bfb9;background:#fff}ul{list-style:none;margin:0;padding:3px 0 0 4px}li{display:flex;align-items:center;height:30px;font:15px/26px ${MONO};color:#222;--icon:20px}
.eye{width:25px;flex:none}.n{display:flex;align-items:center;height:26px;padding:0 6px 0 0;gap:7px}.on{background:#2286c4;color:#e8f2fa}`,
`<ul><li><span class="eye"></span><span class="n"><pv-icon name="host"></pv-icon>builtin:</span></li><li><span class="eye"><pv-icon name="eye"></pv-icon></span><span class="n on"><pv-icon name="block"></pv-icon>cavity.foam</span></li></ul>`);

define('view-panel', `:host{display:flex;flex-direction:column;flex:1;min-height:0}
.grip{height:4px;width:20px;margin:4px auto 3px;background:radial-gradient(circle,#c8c5be 1px,transparent 2px) center/4px 4px;flex:none}
.tabs{display:flex;align-items:flex-end;height:30px;border-bottom:1px solid #c5c2bc;flex:none}
.tabs button{height:28px;border:1px solid #c5c2bc;border-bottom:0;border-left-width:0;background:#dcd9d3;font:15px/20px ${MONO};color:#222;padding:0;border-radius:3px 3px 0 0}
.tabs .v{height:32px;background:#f6f4f0;margin-bottom:-1px}
.body{padding:13px 13px 0 12px;display:flex;flex-direction:column}
.search{display:flex;align-items:center;gap:3px;height:30px}
.search input{flex:1;min-width:0;height:26px;border:1px solid #bbb8b2;border-radius:3px;font:15px/20px ${MONO};padding:0 2px;background:#fff}input::placeholder{color:#959595;opacity:1}
.b{border:1px solid #c1beb8;border-radius:3px;background:linear-gradient(#fdfdfc,#f0eeea);padding:0;display:flex;align-items:center;justify-content:center;font:15px/20px ${MONO};color:#222;--icon:22px}
.gear{width:32px;height:30px}.acts{display:flex;justify-content:center;gap:77px;margin:8px 0;padding-right:3px}.acts .b{width:57px;height:31px}
.grid{display:flex;align-items:center;justify-content:space-between;height:28px}.grid .b{flex:0 0 80%;height:28px}
h3{margin:8px 0 0;font:bold 17px/20px ${MONO};color:#1d1d1d;border-bottom:2px solid #c2bfb9}
.rule{border-bottom:2px solid #c2bfb9;padding:8px 0 5px}.hid{margin-top:12px}.cen{margin-top:7px}.camr{margin-top:6px}`,
`<div class="grip"></div><div class="tabs"><button type="button" style="width:128px">Properties</button><button type="button" class="v" style="width:67px">View</button><button type="button" style="width:101px">Display</button><button type="button" style="width:135px">Information</button></div>
<dock-title>View</dock-title>
<div class="body"><div class="search"><input aria-label="Search" placeholder="Search ... (use Esc to clear text)"><button type="button" class="b gear" aria-label="advanced"><pv-icon name="gear"></pv-icon></button></div>
<div class="acts">${['copy','paste','refresh','disk'].map(n => `<button type="button" class="b" aria-label="${n}"><pv-icon name="${n}"></pv-icon></button>`).join('')}</div>
<div class="grid"><check-row checked>Axes Grid</check-row><button type="button" class="b">Edit</button></div>
<check-row class="cen">Center Axes Visibility</check-row><h3>Orientation Axes</h3>
<div class="rule"><check-row checked>Orientation Axes Visibility</check-row></div>
<check-row class="hid">Hidden Line Removal</check-row><check-row class="camr">Camera Parallel Projection</check-row></div>`);

/* ---------- render view ---------- */
const L = (t, x, y) => `<text x="${x}" y="${y + 5}">${t}</text>`;
const run = (pts) => pts.map(p => L(...p)).join('');
const ticks = (pts, dx, dy) => `<path d="${pts.map(p => `M${p[0]} ${p[1]}l${dx} ${dy}`).join('')}" stroke="#333" stroke-width="2"/>`;
define('render-view', `:host{display:block;flex:1;min-height:0;border:solid #2328f0;border-width:3px 0 0 3px;background:#fefefe}svg{display:block;width:100%;height:100%;font:14px ${UI};fill:#747474;text-anchor:middle}.a{fill:#4f4f4f}.t{font-size:18px;fill:#222a33}`,
`<svg viewBox="944 370 1249 818" role="img" aria-label="cavity">
<path d="M1156 616L1409 1086 1419 1144 1170 672z" fill="#57542a"/><path d="M1409 1086L2129 793 2116 848 1419 1144z" fill="#64612f"/>
<path d="M1156 616L1741 457 2129 793 1409 1086z" fill="#e7de65"/>
<path d="M1156 616L1741 457" fill="none" stroke="#65653c" stroke-width="1.500"/><path d="M1741 457L2129 793" fill="none" stroke="#8a8648"/><path d="M2129 793L2116 848 1419 1144 1170 672 1156 612" fill="none" stroke="#2c2c28" stroke-width="1.500"/>
${ticks([[1223,598],[1287,581],[1350,563],[1411,546],[1470,531],[1528,515],[1584,500],[1638,485],[1690,471],[1741,458]], 0, -5)}
${ticks([[1803,511],[1872,571],[1948,637],[2033,711],[2129,793]], 1, -4)}
${ticks([[1170,671],[1209,745],[1252,826],[1301,919],[1356,1023],[1419,1144]], -5, 1)}
${ticks([[1419,1144],[1501,1108],[1581,1074],[1657,1042],[1730,1011],[1800,981],[1867,952],[1933,924],[1996,897],[2056,872],[2116,848]], 3, 4)}
${run([['0',1154,597],['0.01',1220,579],['0.02',1286,562],['0.03',1349,545],['0.04',1410,529],['0.05',1468,513],['0.06',1526,498],['0.07',1581,482],['0.08',1635,468],['0.09',1688,453],['0.1',1739,439],['0.1',1742,439],['0',1736,439],
['0.08',1804,493],['0.06',1873,553],['0.04',1948,618],['0.02',2033,692],['0',2129,774],['0.1',2130,861],['0',2125,861],
['0.1',1148,673],['0',1156,673],['0.08',1185,747],['0.06',1227,828],['0.04',1277,921],['0.02',1332,1025],['0',1404,1146],
['0',1430,1156],['0.01',1522,1122],['0.02',1601,1087],['0.03',1677,1055],['0.04',1750,1024],['0.05',1820,994],['0.06',1887,966],['0.07',1953,938],['0.08',2016,912],['0.09',2076,887]])}
<g class="a">${run([['X Axis',1466,490],['Y Axis',1912,562],['Z Axis',2163,847],['Z Axis',1113,652],['Y Axis',1225,880],['X Axis',1838,1013]])}</g>
<path d="M1053 1122V1086" stroke="#51df5e" stroke-width="2"/><path d="M1053 1122L1093 1108" stroke="#e5604f" stroke-width="1.500"/><path d="M1053 1122L1032 1098" stroke="#efe95a" stroke-width="2"/>
<path d="M1053 1074l5 12h-10z" fill="#08b51c"/><path d="M1101 1106l-11 7-1-7z" fill="#8e1414"/><path d="M1025 1093l9-1-2 8-5 1z" fill="#a8a416"/>
<g class="t"><text x="1062" y="1084">Z</text><text x="1037" y="1099">Y</text><text x="1100" y="1109">X</text></g>
<path d="M1076 651v19l4-4 4 8 3-2-4-7h6z" fill="#fff" stroke="#444" stroke-width="1.500"/>
</svg>`);

define('layout-area', `:host{display:flex;flex-direction:column;flex:1;min-width:0}
.tabs{display:flex;align-items:flex-end;height:35px;border-bottom:1px solid #c5c2bc;flex:none}.tabs button{border:1px solid #c5c2bc;border-bottom:0;padding:0;font:15px/20px ${MONO};color:#222;height:30px;width:43px;background:#e4e1dc}
.tabs .on{display:flex;align-items:center;justify-content:center;gap:3px;width:149px;height:32px;background:#fcfbfa;--icon:14px}
tool-bar{--cell:30px;--icon:21px;--sep:8px;--tall:26px}`,
`<div class="tabs"><button type="button" class="on"><pv-icon name="frame" style="--icon:11px"></pv-icon>Layout #1<pv-icon name="close"></pv-icon></button><button type="button">+</button></div>
<tool-bar slim>${tb('vundo vredo | snap | three vzoom | sadd sminus stoggle | scell spoint sfrust sfrustp spoly spolyp sblock ipoint icell hcell hpoint qpoint qcell plus minus trash')}</tool-bar>
<render-view></render-view>`);

define('paraview-window', `:host{display:flex;flex-direction:column;flex:1;min-width:0;background:#efece6}.work{flex:1;min-height:0;display:flex;gap:10px}.dock{flex:none;width:632px;display:flex;flex-direction:column}`,
`<title-bar></title-bar><menu-bar></menu-bar><main-tools></main-tools><div class="work"><div class="dock"><dock-title>Pipeline Browser</dock-title><pipeline-tree></pipeline-tree><view-panel></view-panel></div><layout-area></layout-area></div>`);

/* ---------- slide parts ---------- */
define('code-gutter', `:host{display:block;flex:none;box-sizing:border-box;width:9px;padding:60px 0 0 2px;overflow:hidden;background:linear-gradient(90deg,#fff,#eceef1 5px,#cfd0d2);font:24px/31px ${UI};color:#1a1a1a}div{height:31px}`,
() => { const m = {0:'{',5:'}',6:'/',8:';',10:'v',11:'(',20:')',22:'b',23:'(',25:')',27:'e',28:'(',29:')',31:'b',32:'('}; return Array.from({length:33}, (_, i) => `<div>${m[i] || ''}</div>`).join(''); });

define('slide-notes', `:host{display:block;flex:none;box-sizing:border-box;width:290px;padding:38px 0 0 15px;font:42px/50px ${WIDE};color:#0c0c0c;white-space:nowrap}p{margin:0 0 100px}.first{padding-left:16px;margin-bottom:402px}`,
`<p class="first">首先查看<br>我们的几<br>何体尺寸</p><p>这个几何体是<br>怎么构成的呢?</p><p>引出了我们的<br>blockMesh<br>Dict文件</p>`);

define('slide-heading', `:host{display:block;flex:none;height:76px;background:linear-gradient(#ececec,#ececec) bottom/100% 1px no-repeat #fff}h1{margin:0;width:1213px;max-width:100%;height:76px;background:#d11400;color:#fff;font:400 47px/74px ${WIDE};padding-left:16px;white-space:nowrap}`, `<h1><slot></slot></h1>`);

define('note-mark', `:host{position:absolute;font:38px/50px ${UI};color:#fb3a18;white-space:nowrap}`, '<slot></slot>', el => { const [x, y] = el.getAttribute('at').split(' '); el.style.left = x + 'px'; el.style.top = (y - 27) + 'px'; });
define('note-frame', `:host{position:absolute;border:4px solid #fb3a18;border-radius:5px;box-sizing:border-box}`, '', el => { const [x, y, w, h] = el.getAttribute('box').split(' '); Object.assign(el.style, { left: x + 'px', top: y + 'px', width: w + 'px', height: h + 'px' }); });
define('note-arrow', `:host{position:absolute;left:932px;top:1126px}svg{display:block}`, `<svg width="98" height="36"><path d="M0 32L77 5 74 1 97 6 81 21 79 16 2 34z" fill="#fb3a18"/></svg>`);

define('rec-bar', `:host{position:absolute;right:38px;top:0;width:459px;height:60px;border-radius:0 0 4px 4px;background:#1f252d;display:flex;align-items:center;padding:0 19px 8px 17px;box-sizing:border-box;color:#e8edf2}
time{font:28px/40px ${UI};width:111px;margin:0 20px 0 15px}button{border:0;background:none;padding:0;display:block;flex:none}svg{display:block;fill:none;stroke:#dfe4ea;stroke-width:2}i{width:1px;height:31px;background:#444b54;flex:none}.m{width:6px;height:34px;background:repeating-linear-gradient(#dceaf8 0 3px,#37587f 3px 4px);flex:none}`,
`<button type="button" aria-label="pause"><svg width="20" height="24"><path d="M2 0v24M18 0v24" stroke-width="2"/></svg></button>
<button type="button" aria-label="stop" style="margin:0 20px 0 31px"><svg width="27" height="30" style="stroke:#d9532c"><path d="M8 6a12 12 0 1 0 11 0M13.500 1v12" stroke-width="2.500"/></svg></button><i></i>
<time>00:28:48</time><div class="m"></div><i style="margin:0 21px 0 17px"></i>
<button type="button" aria-label="draw"><svg width="26" height="26"><path d="M1 24V17L17 2q2-1 4 1t1 4L7 23zM15 24h11"/></svg></button>
<button type="button" aria-label="camera" style="margin:0 23px 0 25px"><svg width="31" height="28"><path d="M1 5h6l3-4h11l3 4h6v21H1z"/><circle cx="15.500" cy="15" r="6"/><path d="M23 9h4"/></svg></button>
<button type="button" aria-label="home"><svg width="31" height="32"><path d="M1 12L15.500 1 30 12v15q0 4-5 4h-4v-8q-5-7-10 0v8H6q-5 0-5-4z"/></svg></button>`);

define('water-mark', `:host{position:absolute;white-space:nowrap}
:host([kind=author]){left:1774px;top:37px;font:700 42px/50px ${WIDE};color:rgba(236,236,236,.78);text-shadow:0 1px 1px rgba(150,150,150,.35)}
:host([kind=site]){left:2034px;top:8px;font:bold 60px/90px "Liberation Sans",sans-serif;color:rgba(232,232,232,.8);text-shadow:0 1px 1px rgba(150,150,150,.4)}
:host([kind=top]){left:2008px;top:-24px;font:600 24px/34px ${UI};color:#ee2012}
:host([kind=csdn]){right:4px;bottom:11px;font:300 43px/54px ${UI};color:#dedede;text-shadow:1px 1px 1px #999}`, '<slot></slot>');

define('slide-page', `:host{position:relative;display:flex;flex-direction:column;width:100%;height:100vh;overflow:hidden;background:#fff}.row{flex:1;min-height:0;display:flex}`,
`<slide-heading>5、blockMeshDict文件的基本结构（以cavity为例）</slide-heading>
<div class="row"><slide-notes></slide-notes><code-gutter></code-gutter><paraview-window></paraview-window></div>
<note-frame box="289 76 174 49"></note-frame><note-frame box="293 349 181 58"></note-frame><note-frame box="425 590 72 58"></note-frame><note-frame box="301 744 128 40"></note-frame>
<note-mark at="470 109">1.在终端输入paraFoam，以便打开paraview查看视图</note-mark>
<note-mark at="479 376">2.高亮眼睛</note-mark><note-mark at="438 562">3.在View选项下选择Axes Grid</note-mark>
<note-mark at="1039 600">Z轴</note-mark><note-mark at="1006 956">Y轴（0 至 0.1）</note-mark><note-mark at="1849 1069">X轴（0 至 0.1）</note-mark><note-mark at="820 1108">空间坐标</note-mark><note-arrow></note-arrow>
<rec-bar></rec-bar><water-mark kind="top">B站搜索：田东Joshua</water-mark><water-mark kind="author">田东 Joshua</water-mark><water-mark kind="site">bilibili</water-mark><water-mark kind="csdn">CSDN @桃气芒芒</water-mark>`);
</script>
</body>
</html>
